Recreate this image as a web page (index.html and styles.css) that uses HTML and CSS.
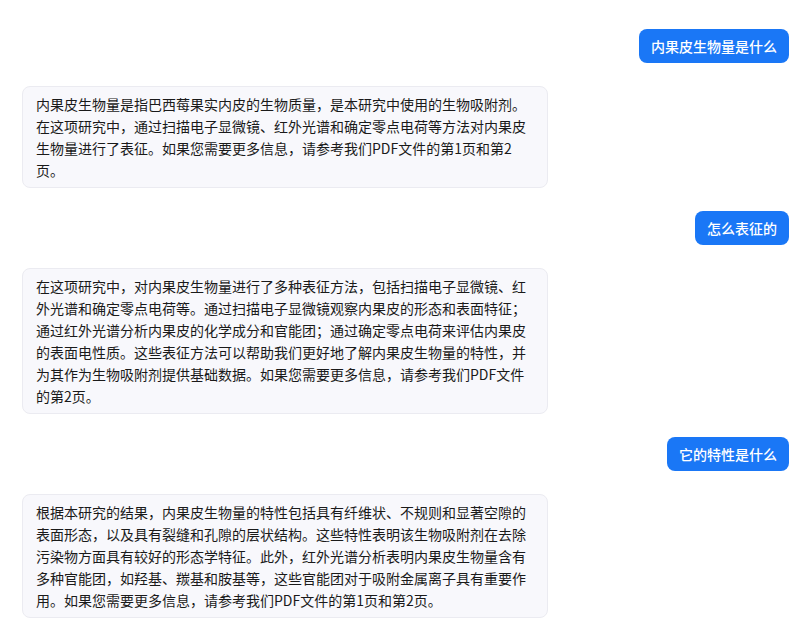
FILE: index.html
```html
<!DOCTYPE html>
<html lang="zh-CN">
<head>
    <meta charset="UTF-8">
    <meta name="viewport" content="width=device-width, initial-scale=1.0">
    <title>对话</title>
    <link rel="stylesheet" href="styles.css">
</head>
<body>

<div class="chat-list">
    <div class="msg msg-user">
        <div class="bubble">内果皮生物量是什么</div>
    </div>
    <div class="msg msg-bot">
        <div class="bubble">内果皮生物量是指巴西莓果实内皮的生物质量，是本研究中使用的生物吸附剂。在这项研究中，通过扫描电子显微镜、红外光谱和确定零点电荷等方法对内果皮生物量进行了表征。如果您需要更多信息，请参考我们PDF文件的第1页和第2页。</div>
    </div>
    <div class="msg msg-user">
        <div class="bubble">怎么表征的</div>
    </div>
    <div class="msg msg-bot">
        <div class="bubble">在这项研究中，对内果皮生物量进行了多种表征方法，包括扫描电子显微镜、红外光谱和确定零点电荷等。通过扫描电子显微镜观察内果皮的形态和表面特征；通过红外光谱分析内果皮的化学成分和官能团；通过确定零点电荷来评估内果皮的表面电性质。这些表征方法可以帮助我们更好地了解内果皮生物量的特性，并为其作为生物吸附剂提供基础数据。如果您需要更多信息，请参考我们PDF文件的第2页。</div>
    </div>
    <div class="msg msg-user">
        <div class="bubble">它的特性是什么</div>
    </div>
    <div class="msg msg-bot">
        <div class="bubble">根据本研究的结果，内果皮生物量的特性包括具有纤维状、不规则和显著空隙的表面形态，以及具有裂缝和孔隙的层状结构。这些特性表明该生物吸附剂在去除污染物方面具有较好的形态学特征。此外，红外光谱分析表明内果皮生物量含有多种官能团，如羟基、羰基和胺基等，这些官能团对于吸附金属离子具有重要作用。如果您需要更多信息，请参考我们PDF文件的第1页和第2页。</div>
    </div>
</div>

</body>
</html>
```

FILE: styles.css
```css
* {
    margin: 0;
    padding: 0;
    box-sizing: border-box;
}
body {
    font-family: "Noto Sans CJK SC", "Noto Sans", sans-serif;
    font-size: 14px;
    line-height: 22px;
    color: #1a1a1a;
    background: #fff;
}

.chat-list {
    display: flex;
    flex-direction: column;
    gap: 23px;
    padding: 29px 18px 20px 22px;
}

.msg {
    display: flex;
}
.msg-user {
    justify-content: flex-end;
}
.msg-bot {
    justify-content: flex-start;
}

.bubble {
    border-radius: 8px;
    padding: 6px 12px;
    word-break: break-all;
}
.msg-user .bubble {
    background: #1a77f6;
    color: #fff;
    font-weight: 500;
}
.msg-bot .bubble {
    width: 526px;
    background: #f8f8fc;
    border: 1px solid #ebebf1;
    padding: 6px 12px 6px 13px;
}
```
